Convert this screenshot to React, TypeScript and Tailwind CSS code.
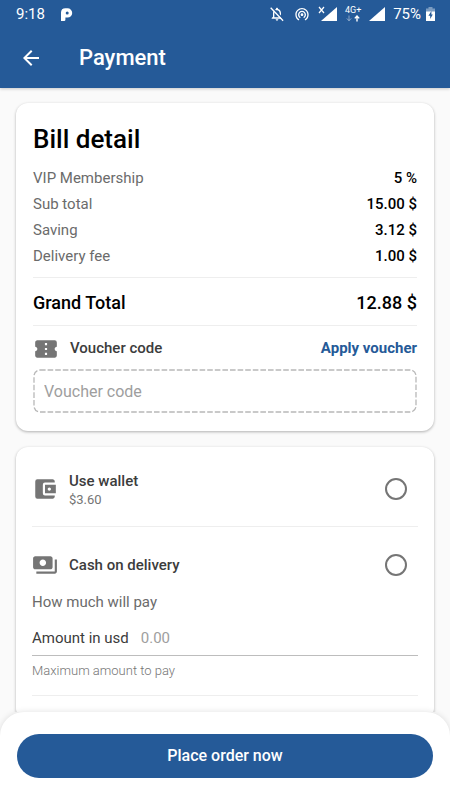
import { useState } from "react";
import {
  MdArrowBack,
  MdConfirmationNumber,
  MdAccountBalanceWallet,
  MdPayments,
  MdNotificationsNone,
  MdWifiTethering,
} from "react-icons/md";

const charges = [
  { label: "VIP Membership", value: "5 %" },
  { label: "Sub total", value: "15.00 $" },
  { label: "Saving", value: "3.12 $" },
  { label: "Delivery fee", value: "1.00 $" },
];

const radioClass =
  "mr-[11px] size-[22px] shrink-0 cursor-pointer appearance-none rounded-full border-2 border-[#757575] bg-white checked:border-[6px] checked:border-[#255a98]";

function SignalIcon() {
  return (
    <svg viewBox="0 0 16 14" className="h-[14px] w-4" fill="currentColor" aria-hidden="true">
      <path d="M0 14 16 0v14z" />
    </svg>
  );
}

function StatusBar() {
  return (
    <div className="flex h-7 items-center pr-[15px] pl-4 text-[15px] leading-none">
      <span>9:18</span>
      <svg viewBox="0 0 12 13" className="ml-4 h-[13px] w-3" aria-hidden="true">
        <path
          fill="currentColor"
          fillRule="evenodd"
          d="M0 13V4.600A4.400 4.400 0 0 1 4.400.3h2.200a4.600 4.600 0 0 1 0 9.200H4.400v2.200a1.300 1.300 0 0 1-1.300 1.300H0zM6.200 3.400a1.500 1.500 0 1 0 0 3 1.500 1.500 0 0 0 0-3z"
        />
      </svg>
      <div className="ml-auto flex items-center">
        <span className="grid">
          <MdNotificationsNone className="col-start-1 row-start-1 size-4" />
          <svg viewBox="0 0 17 17" className="col-start-1 row-start-1 size-4" aria-hidden="true">
            <path d="M3 1.200 16.200 15" stroke="#255a98" strokeWidth="1.600" />
            <path d="M1.800 1.800 15 15.600" stroke="currentColor" strokeWidth="1.400" />
          </svg>
        </span>
        <MdWifiTethering className="ml-[9px] size-4" />
        <svg viewBox="0 0 19 16" className="ml-2 h-4 w-[19px]" aria-hidden="true">
          <path d="M1 1l5 6M6 1 1 7" stroke="currentColor" strokeWidth="1.200" />
          <path d="M3 15 19 1v14z" fill="currentColor" />
        </svg>
        <span className="ml-2 flex w-4 flex-col items-center">
          <span className="text-[9px] leading-[9px]">4G+</span>
          <svg viewBox="0 0 14 7" className="h-[7px] w-[14px]" fill="none" stroke="currentColor" aria-hidden="true">
            <path d="M3 .5v5M.8 3.400 3 5.800l2.200-2.400" opacity=".45" />
            <path d="M11 6.500V1.500M8.800 3.400 11 1l2.200 2.400" strokeWidth="1.400" />
          </svg>
        </span>
        <span className="ml-2">
          <SignalIcon />
        </span>
        <span className="ml-2">75%</span>
        <svg viewBox="0 0 9 14" className="ml-[5px] h-[14px] w-[9px]" aria-hidden="true">
          <path d="M2.500 0h4v1.500H9V5H0V1.500h2.500z" fill="currentColor" opacity=".4" />
          <path d="M0 4.500h9V14H0z" fill="currentColor" />
          <path d="M5.400 4 2.400 8.800h1.800V12l2.600-4.400H5.400z" fill="#255a98" />
        </svg>
      </div>
    </div>
  );
}

export default function App() {
  const [method, setMethod] = useState("");

  return (
    <div className="flex h-screen flex-col bg-[#fafafa] font-[Roboto,sans-serif] text-[#3c3c3c]">
      <header className="z-10 shrink-0 bg-[#255a98] text-white shadow-[0_1px_3px_rgba(0,0,0,0.2)]">
        <StatusBar />
        <div className="flex h-[60px] items-center pl-[19px]">
          <button type="button" aria-label="Back">
            <MdArrowBack className="size-6" />
          </button>
          <h1 className="ml-9 text-[22px] leading-7 font-medium">Payment</h1>
        </div>
      </header>

      <main className="flex min-h-0 flex-1 flex-col gap-4 overflow-hidden px-4 pt-[15px]">
        <section className="shrink-0 rounded-xl bg-white px-[17px] pt-5 pb-[18px] shadow-[0_1px_3px_rgba(0,0,0,0.3)]">
          <h2 className="text-[26px] leading-8 font-medium text-black">Bill detail</h2>
          <dl className="mt-[10px] pb-2 text-[15px] leading-[26px]">
            {charges.map((c) => (
              <div key={c.label} className="flex justify-between">
                <dt className="text-[#6b6b6b]">{c.label}</dt>
                <dd className="font-medium text-black">{c.value}</dd>
              </div>
            ))}
          </dl>
          <div className="flex h-[49px] items-center justify-between border-y border-[#eeeeee] pt-[2px] text-lg font-medium text-black">
            <span>Grand Total</span>
            <span>12.88 $</span>
          </div>
          <div className="flex h-[43px] items-center pt-[2px]">
            <MdConfirmationNumber className="size-[26px] text-[#757575]" />
            <label htmlFor="voucher" className="ml-[11px] text-[15px] font-medium">
              Voucher code
            </label>
            <button type="button" className="ml-auto text-[15px] font-bold text-[#255a98]">
              Apply voucher
            </button>
          </div>
          <div className="relative h-11">
            <input
              id="voucher"
              type="text"
              placeholder="Voucher code"
              className="h-full w-full rounded-lg px-[11px] text-base outline-none placeholder:text-[#9e9e9e]"
            />
            <svg className="pointer-events-none absolute inset-0 size-full overflow-visible p-px" aria-hidden="true">
              <rect
                width="100%"
                height="100%"
                rx="6"
                fill="none"
                stroke="#b8b8b8"
                strokeWidth="1.300"
                strokeDasharray="5.600 2"
              />
            </svg>
          </div>
        </section>

        <section className="shrink-0 rounded-xl bg-white px-4 pb-6 shadow-[0_1px_3px_rgba(0,0,0,0.3)]">
          <div className="flex h-20 items-center border-b border-[#eeeeee] pt-1">
            <MdAccountBalanceWallet className="size-[26px] text-[#757575]" />
            <label htmlFor="wallet" className="ml-[11px] flex-1 pt-[2px]">
              <span className="block text-[15px] leading-5 font-medium">Use wallet</span>
              <span className="block text-[13px] leading-[18px] text-[#757575]">$3.60</span>
            </label>
            <input
              id="wallet"
              type="radio"
              name="method"
              checked={method === "wallet"}
              onChange={() => setMethod("wallet")}
              className={radioClass}
            />
          </div>
          <div className="mt-4 flex h-11 items-center">
            <MdPayments className="size-[26px] text-[#757575]" />
            <label htmlFor="cash" className="ml-[11px] flex-1 text-[15px] font-medium">
              Cash on delivery
            </label>
            <input
              id="cash"
              type="radio"
              name="method"
              checked={method === "cash"}
              onChange={() => setMethod("cash")}
              className={radioClass}
            />
          </div>
          <p className="mt-[3px] text-[15px] leading-6 text-[#6b6b6b]">How much will pay</p>
          <div className="mt-2 flex h-[34px] items-center border-b border-[#bdbdbd]">
            <label htmlFor="amount" className="text-[15px]">
              Amount in usd
            </label>
            <input
              id="amount"
              type="text"
              inputMode="decimal"
              placeholder="0.00"
              className="ml-3 min-w-0 flex-1 text-[15px] outline-none placeholder:text-[#9e9e9e]"
            />
          </div>
          <p className="border-b border-[#eeeeee] pt-[5px] pb-[14px] text-[13px] leading-5 font-light text-[#757575]">
            Maximum amount to pay
          </p>
        </section>
      </main>

      <footer className="z-10 shrink-0 rounded-t-3xl bg-white px-[17px] py-[22px] shadow-[0_0_6px_rgba(0,0,0,0.12)]">
        <button
          type="button"
          className="h-11 w-full rounded-full bg-[#255a98] text-base font-medium text-white"
        >
          Place order now
        </button>
      </footer>
    </div>
  );
}
